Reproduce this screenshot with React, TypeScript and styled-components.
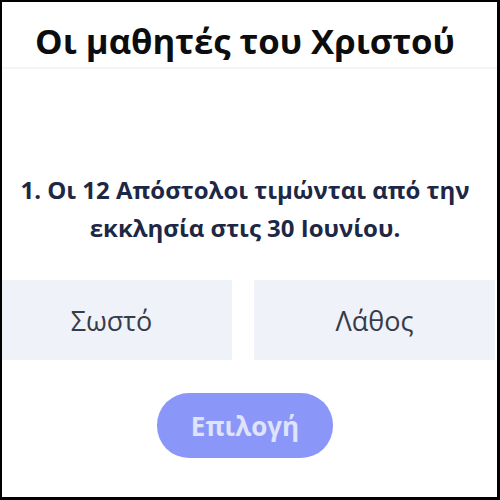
import React from "react";
import styled, { createGlobalStyle } from "styled-components";

const Global = createGlobalStyle`
  html, body { margin: 0; padding: 0; background: #ffffff; }
  body { font-family: "Open Sans", "Noto Sans", sans-serif; }
  * { box-sizing: border-box; }
`;

const Frame = styled.div`
  width: 500px;
  height: 500px;
  border-style: solid;
  border-color: #000;
  border-width: 2px 3px 3px 2px;
  padding-right: 9px;
  background: #fff;
  display: flex;
  flex-direction: column;
  overflow: hidden;
`;

const Header = styled.header`
  height: 67px;
  margin-right: -9px;
  padding-right: 9px;
  display: flex;
  align-items: center;
  justify-content: center;
  border-bottom: 2px solid #f4f4f4;
`;

const Title = styled.h1`
  margin: 0;
  font-size: 34.7px;
  font-weight: 700;
  color: #0d0d0d;
  padding-top: 12px;
`;

const Question = styled.p`
  margin: 102px 0 0;
  text-align: center;
  font-size: 24px;
  line-height: 38px;
  font-weight: 700;
  color: #1d2746;
`;

const Choices = styled.div`
  margin-top: 33px;
  margin-left: -11px;
  width: 504px;
  display: grid;
  grid-template-columns: 1fr 1fr;
  column-gap: 22px;
`;

const Choice = styled.button`
  height: 80px;
  border: none;
  background: #eff2f9;
  font-family: inherit;
  font-size: 27px;
  color: #373c4a;
  padding: 0;
  cursor: pointer;
`;

const Submit = styled.button`
  align-self: center;
  margin-top: 33px;
  width: 176px;
  height: 65px;
  border: none;
  border-radius: 32px;
  background: #8b97f8;
  color: #dfe3fb;
  font-family: inherit;
  font-size: 26px;
  font-weight: 700;
  cursor: pointer;
`;

export default function App() {
  return (
    <>
      <Global />
      <Frame>
        <Header>
          <Title>Οι μαθητές του Χριστού</Title>
        </Header>
        <Question>
          1. Οι 12 Απόστολοι τιμώνται από την
          <br />
          εκκλησία στις 30 Ιουνίου.
        </Question>
        <Choices>
          <Choice>Σωστό</Choice>
          <Choice>Λάθος</Choice>
        </Choices>
        <Submit>Επιλογή</Submit>
      </Frame>
    </>
  );
}
